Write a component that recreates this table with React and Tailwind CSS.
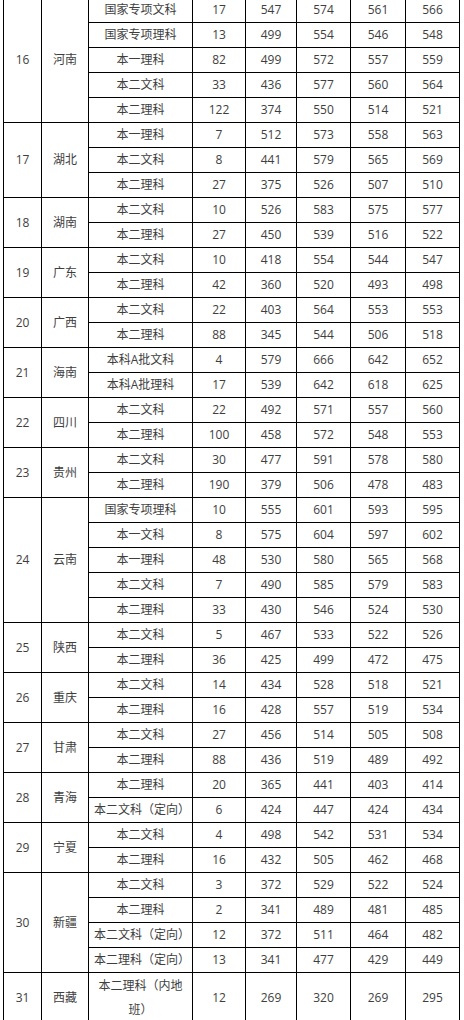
import React from "react";

const groups = [
  ["16", "河南", [
    ["国家专项文科", "17", "547", "574", "561", "566"],
    ["国家专项理科", "13", "499", "554", "546", "548"],
    ["本一理科", "82", "499", "572", "557", "559"],
    ["本二文科", "33", "436", "577", "560", "564"],
    ["本二理科", "122", "374", "550", "514", "521"],
  ]],
  ["17", "湖北", [
    ["本一理科", "7", "512", "573", "558", "563"],
    ["本二文科", "8", "441", "579", "565", "569"],
    ["本二理科", "27", "375", "526", "507", "510"],
  ]],
  ["18", "湖南", [
    ["本二文科", "10", "526", "583", "575", "577"],
    ["本二理科", "27", "450", "539", "516", "522"],
  ]],
  ["19", "广东", [
    ["本二文科", "10", "418", "554", "544", "547"],
    ["本二理科", "42", "360", "520", "493", "498"],
  ]],
  ["20", "广西", [
    ["本二文科", "22", "403", "564", "553", "553"],
    ["本二理科", "88", "345", "544", "506", "518"],
  ]],
  ["21", "海南", [
    ["本科A批文科", "4", "579", "666", "642", "652"],
    ["本科A批理科", "17", "539", "642", "618", "625"],
  ]],
  ["22", "四川", [
    ["本二文科", "22", "492", "571", "557", "560"],
    ["本二理科", "100", "458", "572", "548", "553"],
  ]],
  ["23", "贵州", [
    ["本二文科", "30", "477", "591", "578", "580"],
    ["本二理科", "190", "379", "506", "478", "483"],
  ]],
  ["24", "云南", [
    ["国家专项理科", "10", "555", "601", "593", "595"],
    ["本一文科", "8", "575", "604", "597", "602"],
    ["本一理科", "48", "530", "580", "565", "568"],
    ["本二文科", "7", "490", "585", "579", "583"],
    ["本二理科", "33", "430", "546", "524", "530"],
  ]],
  ["25", "陕西", [
    ["本二文科", "5", "467", "533", "522", "526"],
    ["本二理科", "36", "425", "499", "472", "475"],
  ]],
  ["26", "重庆", [
    ["本二文科", "14", "434", "528", "518", "521"],
    ["本二理科", "16", "428", "557", "519", "534"],
  ]],
  ["27", "甘肃", [
    ["本二文科", "27", "456", "514", "505", "508"],
    ["本二理科", "88", "436", "519", "489", "492"],
  ]],
  ["28", "青海", [
    ["本二理科", "20", "365", "441", "403", "414"],
    ["本二文科（定向）", "6", "424", "447", "424", "434"],
  ]],
  ["29", "宁夏", [
    ["本二文科", "4", "498", "542", "531", "534"],
    ["本二理科", "16", "432", "505", "462", "468"],
  ]],
  ["30", "新疆", [
    ["本二文科", "3", "372", "529", "522", "524"],
    ["本二理科", "2", "341", "489", "481", "485"],
    ["本二文科（定向）", "12", "372", "511", "464", "482"],
    ["本二理科（定向）", "13", "341", "477", "429", "449"],
  ]],
  ["31", "西藏", [
    ["本二理科（内地班）", "12", "269", "320", "269", "295"],
  ]],
];

const spanClass = {
  1: "row-span-1",
  2: "row-span-2",
  3: "row-span-3",
  4: "row-span-4",
  5: "row-span-5",
};

function Cell({ children, className = "" }) {
  return (
    <div
      className={
        "bg-white flex items-center justify-center text-center px-[5px] leading-[24px] " +
        className
      }
    >
      {children}
    </div>
  );
}

export default function App() {
  const cells = [];
  groups.forEach(([num, prov, rows], gi) => {
    const span = spanClass[rows.length];
    cells.push(
      <Cell key={`n${gi}`} className={span}>
        {num}
      </Cell>
    );
    cells.push(
      <Cell key={`p${gi}`} className={span}>
        {prov}
      </Cell>
    );
    rows.forEach((r, ri) => {
      r.forEach((v, ci) => {
        cells.push(<Cell key={`c${gi}-${ri}-${ci}`}>{v}</Cell>);
      });
    });
  });

  return (
    <div className="w-[464px] h-[1020px] overflow-hidden bg-white">
      <div
        className="ml-[3px] mt-[-3px] w-[457px] grid gap-px p-px bg-black text-[12px] text-[#3e3e3e] grid-cols-[37px_46px_103px_52px_50px_53px_54px_53px] grid-rows-[repeat(39,24px)_50px]"
        style={{ fontFamily: '"Open Sans", "Noto Sans CJK SC", sans-serif' }}
      >
        {cells}
      </div>
    </div>
  );
}
